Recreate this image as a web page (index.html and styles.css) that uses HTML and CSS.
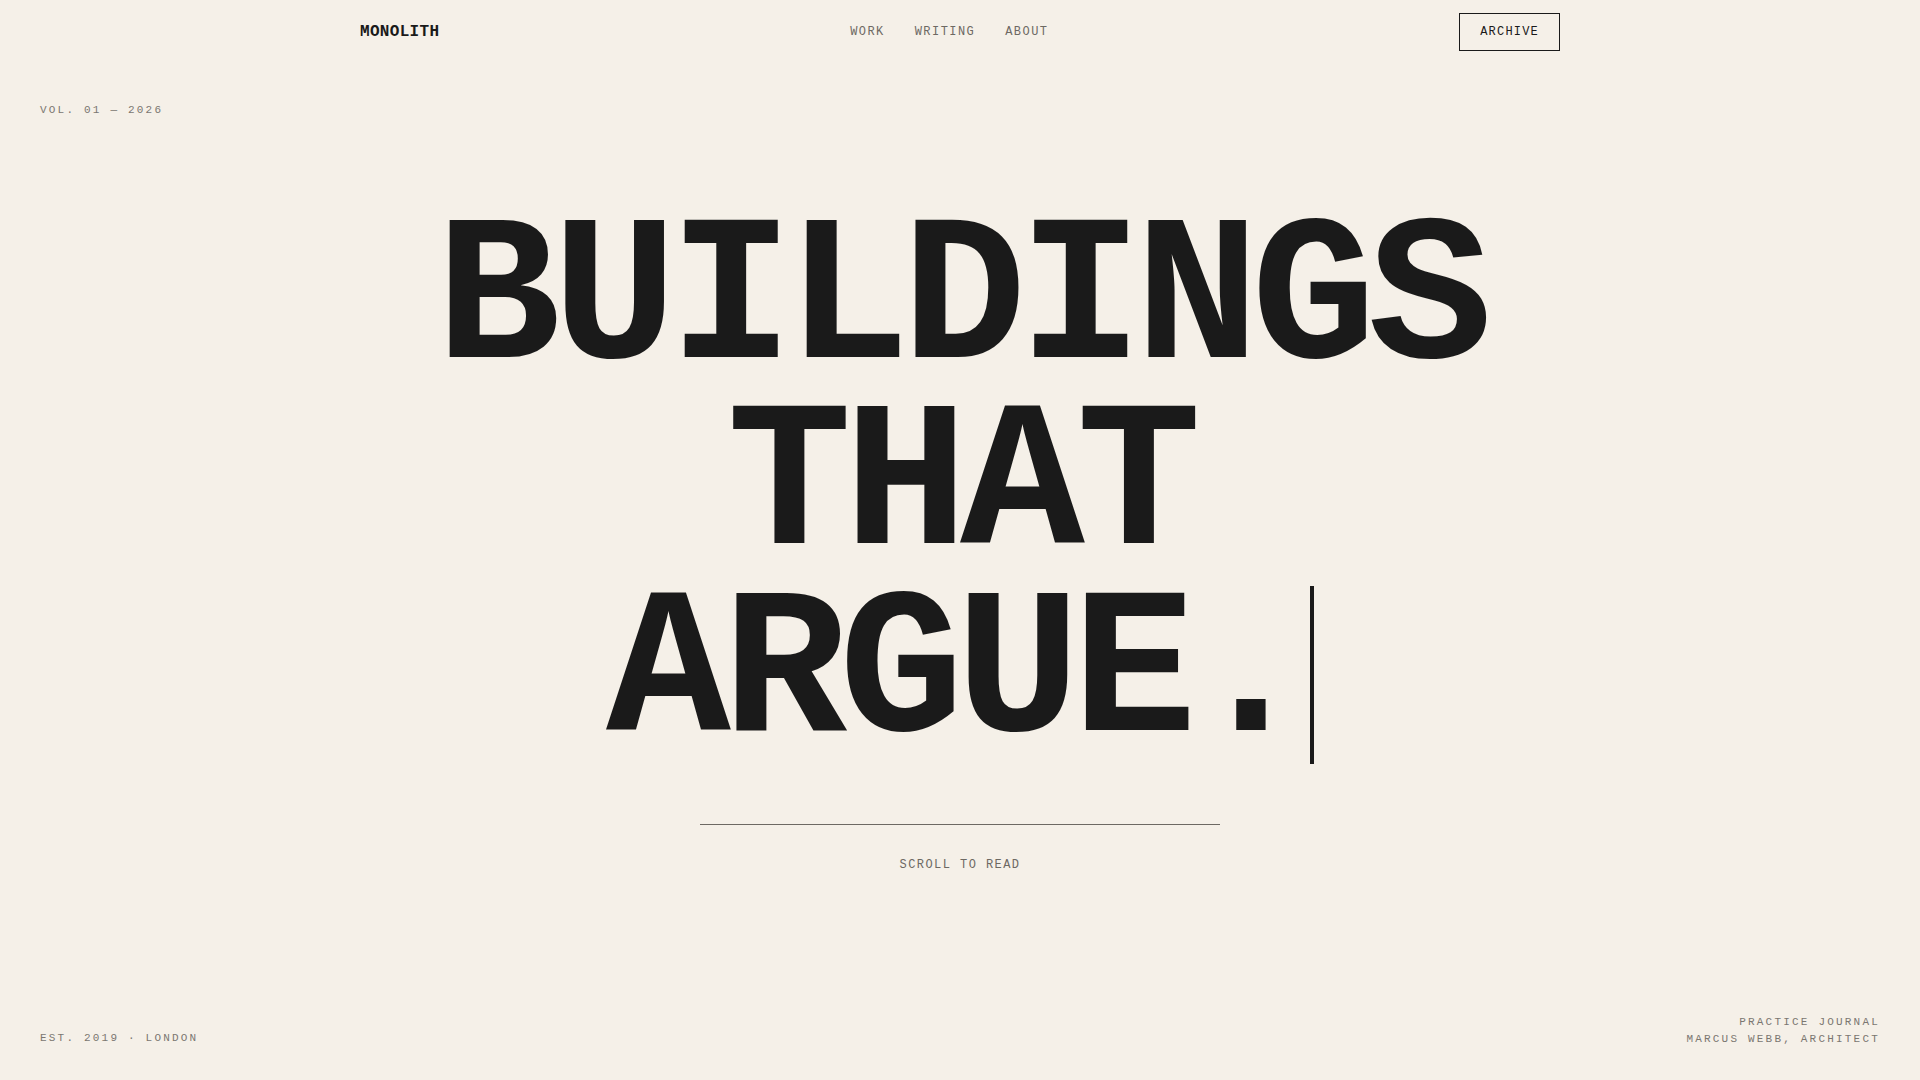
FILE: index.html
```html
<!DOCTYPE html>
<html lang="en">
<head>
<meta charset="utf-8">
<title>Monolith — Buildings That Argue</title>
<link rel="stylesheet" href="styles.css">
</head>
<body>
<div class="page">
  <header class="site-header">
    <a class="logo" href="#">MONOLITH</a>
    <nav class="nav">
      <a href="#">WORK</a>
      <a href="#">WRITING</a>
      <a href="#">ABOUT</a>
    </nav>
    <a class="btn-archive" href="#">ARCHIVE</a>
  </header>

  <div class="meta-top">VOL. 01 — 2026</div>

  <main class="hero">
    <h1 class="headline">BUILDINGS<br>THAT<br>ARGUE.<span class="cursor"></span></h1>
    <div class="divider"></div>
    <p class="scroll">SCROLL TO READ</p>
  </main>

  <footer class="site-footer">
    <div class="meta">EST. 2019 · LONDON</div>
    <div class="meta meta-right">PRACTICE JOURNAL<br>MARCUS WEBB, ARCHITECT</div>
  </footer>
</div>
</body>
</html>
```

FILE: styles.css
```css
html, body {
  margin: 0;
  padding: 0;
}

body {
  background: #f5f0e8;
  color: #1a1a1a;
  font-family: "Liberation Mono", "DejaVu Sans Mono", monospace;
}

a {
  color: inherit;
  text-decoration: none;
}

.page {
  display: flex;
  flex-direction: column;
  height: 100vh;
  overflow: hidden;
}

.site-header {
  width: 1200px;
  height: 64px;
  margin: 0 auto;
  display: flex;
  align-items: center;
  justify-content: space-between;
}

.logo {
  font-size: 16px;
  font-weight: 700;
  letter-spacing: 0.02em;
  color: #1a1a1a;
}

.nav {
  display: flex;
  gap: 30px;
}

.nav a {
  font-size: 12px;
  letter-spacing: 0.12em;
  color: #6d6963;
}

.btn-archive {
  box-sizing: border-box;
  height: 38px;
  padding: 0 20px;
  display: flex;
  align-items: center;
  border: 1px solid #1a1a1a;
  font-size: 12px;
  letter-spacing: 0.1em;
  color: #1a1a1a;
}

.meta-top,
.meta {
  font-size: 11px;
  line-height: 17.6px;
  letter-spacing: 0.2em;
  color: #7b7771;
}

.meta-top {
  margin-top: 38px;
  padding: 0 40px;
}

.hero {
  margin-top: 89px;
  display: flex;
  flex-direction: column;
  align-items: center;
}

.headline {
  margin: 0;
  font-size: 208px;
  line-height: 186.5px;
  font-weight: 700;
  letter-spacing: -0.04em;
  text-align: center;
  color: #1a1a1a;
}

.cursor {
  display: inline-block;
  width: 4px;
  height: 178px;
  margin-left: 5px;
  vertical-align: -34px;
  background: #1a1a1a;
}

.divider {
  width: 520px;
  height: 1px;
  margin-top: 56px;
  background: #6d6963;
}

.scroll {
  margin: 31px 0 0;
  font-size: 12px;
  line-height: 18px;
  letter-spacing: 0.12em;
  color: #6d6963;
}

.site-footer {
  margin-top: auto;
  padding: 0 40px 32px;
  display: flex;
  justify-content: space-between;
  align-items: flex-end;
}

.meta-right {
  text-align: right;
  line-height: 17px;
}
```
